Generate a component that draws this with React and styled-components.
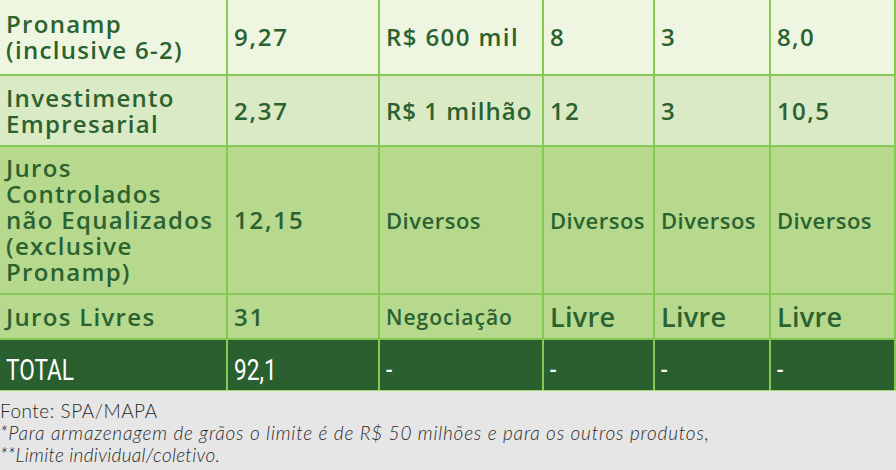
import styled, { createGlobalStyle } from 'styled-components';

const GlobalStyle = createGlobalStyle`
    html, body {
        margin: 0;
        padding: 0;
        background: #e6e6e6;
    }
    body {
        width: 896px;
        height: 470px;
        overflow: hidden;
    }
`

const Page = styled.div`
    width: 896px;
    height: 470px;
    background: #e6e6e6;
    font-family: "Open Sans", "Liberation Sans", sans-serif;
`

const Table = styled.div`
    display: grid;
    grid-template-columns: 226px 150px 162px 109px 114px 123px;
    grid-template-rows: 74px 69px 146px 43px 50px;
    gap: 2px;
    padding-right: 2px;
    background: #84c952;
    border-bottom: 1px solid #9fd46f;
`

const rowColors = {
    light: '#eef6e1',
    mid: '#d9eac5',
    strong: '#b6d98e',
    total: '#2a5f30',
}

const Cell = styled.div`
    display: flex;
    align-items: center;
    padding: 0 4px 0 6px;
    background: ${(p) => rowColors[p.$tone]};
    color: #2b6230;
    font-size: ${(p) => p.$size || 24}px;
    font-weight: 600;
    line-height: 26px;
    white-space: nowrap;
    letter-spacing: ${(p) => p.$spacing ?? 1.4}px;
`

const TotalCell = styled(Cell)`
    background: #2a5f30;
    color: #ffffff;
    padding-top: 9px;
    font-family: "Roboto", "Liberation Sans", sans-serif;
    font-weight: 400;
    font-size: 29px;
    letter-spacing: 0;
`

const Condensed = styled.span`
    display: inline-block;
    transform: scaleX(0.78);
    transform-origin: left center;
`

const Footer = styled.div`
    padding-top: 9px;
    color: #2a2a2a;
    font-family: "Lato", "Open Sans", sans-serif;
    font-size: 19px;
    line-height: 22px;
    font-weight: 300;
`

const Source = styled.div`
    letter-spacing: 0.5px;
`

const Note = styled.div`
    font-style: italic;
    letter-spacing: ${(p) => p.$spacing}px;
`

const rows = [
    {
        tone: 'light',
        cells: [
            { text: ['Pronamp', '(inclusive 6-2)'], spacing: 1.3 },
            { text: ['9,27'], spacing: 1.8 },
            { text: ['R$ 600 mil'] },
            { text: ['8'] },
            { text: ['3'] },
            { text: ['8,0'] },
        ],
    },
    {
        tone: 'mid',
        cells: [
            { text: ['Investimento', 'Empresarial'], spacing: 1.3 },
            { text: ['2,37'], spacing: 1.8 },
            { text: ['R$ 1 milhão'], spacing: 1 },
            { text: ['12'] },
            { text: ['3'] },
            { text: ['10,5'] },
        ],
    },
    {
        tone: 'strong',
        cells: [
            { text: ['Juros', 'Controlados', 'não Equalizados', '(exclusive', 'Pronamp)'], spacing: 1.3 },
            { text: ['12,15'], spacing: 1.8 },
            { text: ['Diversos'], size: 22, spacing: 0.5 },
            { text: ['Diversos'], size: 22, spacing: 0.5 },
            { text: ['Diversos'], size: 22, spacing: 0.5 },
            { text: ['Diversos'], size: 22, spacing: 0.5 },
        ],
    },
    {
        tone: 'strong',
        cells: [
            { text: ['Juros Livres'], spacing: 1.3 },
            { text: ['31'], spacing: 1.8 },
            { text: ['Negociação'], size: 21, spacing: 1 },
            { text: ['Livre'], size: 27, spacing: 0.3 },
            { text: ['Livre'], size: 27, spacing: 0.3 },
            { text: ['Livre'], size: 27, spacing: 0.3 },
        ],
    },
]

const totals = ['TOTAL', '92,1', '-', '-', '-', '-']

export default function App() {
    return (
        <Page>
            <GlobalStyle />
            <Table>
                {rows.map((row, r) =>
                    row.cells.map((cell, c) => (
                        <Cell
                            key={`${r}-${c}`}
                            $tone={row.tone}
                            $size={cell.size}
                            $spacing={cell.spacing}
                        >
                            <div>
                                {cell.text.map((line) => (
                                    <div key={line}>{line}</div>
                                ))}
                            </div>
                        </Cell>
                    ))
                )}
                {totals.map((t, i) => (
                    <TotalCell key={`t-${i}`} $tone="total">
                        <Condensed>{t}</Condensed>
                    </TotalCell>
                ))}
            </Table>
            <Footer>
                <Source>Fonte: SPA/MAPA</Source>
                <Note $spacing={0.8}>*Para armazenagem de grãos o limite é de R$ 50 milhões e para os outros produtos,</Note>
                <Note $spacing={0.3}>**Limite individual/coletivo.</Note>
            </Footer>
        </Page>
    )
}
